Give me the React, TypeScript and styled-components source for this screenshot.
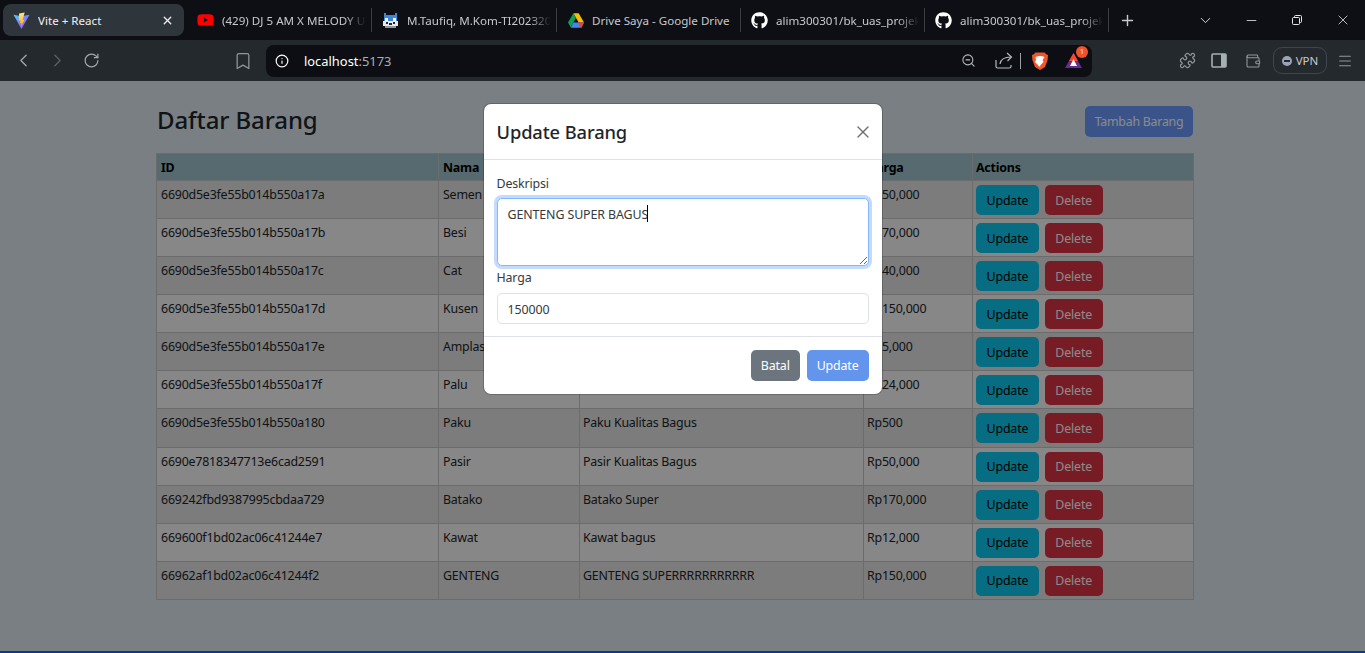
import React from "react";
import styled, { createGlobalStyle } from "styled-components";
import { FaGithub, FaYoutube } from "react-icons/fa";
import {
  ChevronLeft,
  ChevronRight,
  ChevronDown,
  RotateCw,
  Bookmark,
  Info,
  ZoomOut,
  Menu,
  Minus,
  Plus,
  X,
  Wallet,
  Puzzle,
} from "lucide-react";

const FONT = `"Noto Sans", "Open Sans", sans-serif`;

const GlobalStyle = createGlobalStyle`
  html, body {
    margin: 0;
    padding: 0;
    height: 100%;
    overflow: hidden;
    font-family: ${FONT};
  }
  * { box-sizing: border-box; }
`;

const Screen = styled.div`
  width: 1365px;
  height: 653px;
  display: flex;
  flex-direction: column;
  overflow: hidden;
  border-bottom: 2px solid #053a8c;
`;

/* browser frame */
const TabStrip = styled.div`
  height: 40px;
  background: #0e0f14;
  display: flex;
  align-items: flex-start;
  padding: 4px 0 0 3px;
  color: #c6c9cc;
`;

const Tab = styled.div<{ $active?: boolean; $w: number; $pl?: number }>`
  width: ${(p) => p.$w}px;
  height: 32px;
  flex: none;
  display: flex;
  align-items: center;
  gap: 8px;
  padding: 0 ${(p) => (p.$active ? 10 : 5)}px 0 ${(p) => p.$pl ?? 10}px;
  border-radius: 8px;
  background: ${(p) => (p.$active ? "#2f363b" : "transparent")};
  color: ${(p) => (p.$active ? "#f0f1f2" : "#c6c9cc")};
  position: relative;
  font-size: 11.6px;
`;

const TabSep = styled.div`
  width: 1px;
  height: 24px;
  margin-top: 4px;
  background: #3a3e43;
  flex: none;
`;

const TabIcon = styled.span`
  width: 17px;
  height: 17px;
  flex: none;
  display: flex;
  align-items: center;
  justify-content: center;
`;

const TabTitle = styled.span<{ $fade?: boolean }>`
  flex: 1;
  min-width: 0;
  white-space: nowrap;
  overflow: hidden;
  ${(p) =>
    p.$fade
      ? `mask-image: linear-gradient(to right, #000 85%, transparent 100%);`
      : ""}
`;

const WindowControls = styled.div`
  margin-left: auto;
  margin-right: -1px;
  display: flex;
  align-items: center;
  height: 32px;
`;

const WinButton = styled.div`
  width: 46px;
  display: flex;
  justify-content: center;
  color: #e4e6e8;
`;

const NewTab = styled.div`
  width: 36px;
  height: 32px;
  flex: none;
  display: flex;
  align-items: center;
  justify-content: center;
  color: #c6c9cc;
`;

const Toolbar = styled.div`
  height: 41px;
  background: #24292d;
  display: flex;
  align-items: center;
  color: #a3a9ae;
  padding-left: 6px;
`;

const NavButton = styled.div<{ $dim?: boolean }>`
  width: 34px;
  display: flex;
  justify-content: center;
  color: ${(p) => (p.$dim ? "#5b6166" : "#a3a9ae")};
`;

const BookmarkSlot = styled.div`
  width: 152px;
  display: flex;
  justify-content: flex-end;
  padding-right: 7px;
  color: #8f979d;
`;

const UrlBar = styled.div`
  width: 826px;
  height: 32px;
  margin-left: 6px;
  background: #0d0e13;
  border-radius: 8px;
  display: flex;
  align-items: center;
  padding: 0 10px 0 9px;
  color: #e6e8ea;
  font-size: 12.9px;
`;

const UrlText = styled.span`
  margin-left: 15px;
  flex: 1;
  color: #fff;
  b {
    font-weight: 400;
    color: #a9aeb3;
  }
`;

const UrlIcon = styled.span<{ $gap?: number }>`
  display: flex;
  margin-left: ${(p) => p.$gap ?? 0}px;
  color: #b5babe;
  position: relative;
`;

const UrlDivider = styled.span`
  width: 1px;
  height: 16px;
  background: #9aa0a5;
  margin-left: 7px;
`;

const Badge = styled.span`
  position: absolute;
  top: -7px;
  right: -6px;
  width: 12px;
  height: 12px;
  border-radius: 50%;
  background: #f0532c;
  color: #fff;
  font-size: 7px;
  line-height: 12px;
  text-align: center;
`;

const ToolGroup = styled.div`
  display: flex;
  align-items: center;
  margin-left: 87px;
  color: #8f979d;
`;

const ToolSlot = styled.span<{ $ml?: number }>`
  display: flex;
  margin-left: ${(p) => p.$ml ?? 0}px;
`;

const VpnPill = styled.div`
  height: 27px;
  width: 54px;
  margin-left: 12px;
  border: 1px solid #3f464b;
  border-radius: 9px;
  display: flex;
  align-items: center;
  justify-content: center;
  gap: 4px;
  font-size: 11.5px;
  color: #c6cace;
`;

const VpnDot = styled.span`
  width: 10px;
  height: 10px;
  border-radius: 50%;
  background: #9ca3b5;
  position: relative;
  &::after {
    content: "";
    position: absolute;
    left: 2px;
    right: 2px;
    top: 4px;
    height: 2px;
    background: #24292d;
  }
`;

/* page */
const Page = styled.div`
  flex: 1;
  position: relative;
  background: #e2ebf3;
  padding: 19px 172px 0 156px;
`;

const PageHeader = styled.div`
  height: 53px;
  display: flex;
  justify-content: space-between;
  align-items: flex-start;
`;

const Title = styled.h2`
  margin: 0 0 0 1px;
  font-size: 24px;
  line-height: 39px;
  font-weight: 500;
  letter-spacing: -0.1px;
  color: #212529;
`;

const Button = styled.button<{ $bg: string; $fg?: string }>`
  height: 30px;
  border: 0;
  border-radius: 5px;
  padding: 0 10.5px;
  background: ${(p) => p.$bg};
  color: ${(p) => p.$fg ?? "#fff"};
  font-family: ${FONT};
  font-size: 12.4px;
  letter-spacing: -0.15px;
  white-space: nowrap;
`;

const AddButton = styled(Button)`
  margin-top: 6px;
  height: 31px;
  width: 108px;
  padding: 0;
  letter-spacing: -0.25px;
`;

const FooterButton = styled(Button)`
  height: 31px;
  padding: 0 10px;
`;

const Table = styled.table`
  width: 1037px;
  border-collapse: collapse;
  table-layout: fixed;
  font-size: 12.4px;
  letter-spacing: -0.2px;
  color: #212529;
`;

const Th = styled.th`
  height: 27px;
  padding: 0 4px;
  text-align: left;
  font-weight: 700;
  color: #000;
  background: #9fc4cf;
  border: 1px solid #c4c8cb;
  &:nth-child(n + 3) {
    padding-left: 3px;
  }
`;

const Row = styled.tr<{ $odd: boolean }>`
  background: ${(p) => (p.$odd ? "#e5e5e5" : "#f9f9f9")};
`;

const Td = styled.td`
  height: 38.09px;
  padding: 3px 4px 3px;
  vertical-align: top;
  border: 1px solid #c8c8c8;
  line-height: 21px;
  &:nth-child(n + 3) {
    padding-left: 3px;
  }
`;

const Actions = styled.div`
  display: flex;
  gap: 6px;
  margin-top: 1px;
`;

const Backdrop = styled.div`
  position: absolute;
  inset: 0;
  background: rgba(0, 0, 0, 0.46);
  display: flex;
  justify-content: center;
  align-items: flex-start;
  padding-top: 23px;
`;

const Modal = styled.div`
  width: 398px;
  height: 290px;
  background: #fff;
  border-radius: 7px;
  box-shadow: 0 0 0 1px rgba(0, 0, 0, 0.2);
  color: #212529;
  display: flex;
  flex-direction: column;
`;

const ModalHeader = styled.div`
  height: 56px;
  flex: none;
  padding: 0 13px;
  border-bottom: 1px solid #dee2e6;
  display: flex;
  align-items: center;
  justify-content: space-between;
`;

const ModalTitle = styled.h5`
  margin: 0;
  font-size: 18.3px;
  font-weight: 500;
  letter-spacing: -0.1px;
`;

const CloseButton = styled.span`
  display: flex;
  color: #6e6e6e;
  margin-right: -4px;
`;

const ModalBody = styled.div`
  flex: 1;
  padding: 14px 13px 0;
  display: flex;
  flex-direction: column;
`;

const Label = styled.label<{ $mt?: number }>`
  margin-top: ${(p) => p.$mt ?? 0}px;
  font-size: 12.4px;
  line-height: 19px;
  letter-spacing: -0.15px;
  color: #343a40;
`;

const FieldWrap = styled.div`
  position: relative;
  margin-top: 5px;
  height: 68px;
`;

const TextArea = styled.textarea`
  display: block;
  width: 100%;
  height: 68px;
  padding: 6px 10px;
  border: 1px solid #86b7fe;
  border-radius: 5px;
  box-shadow: 0 0 0 3px #c2dbfe;
  outline: 0;
  font-family: ${FONT};
  font-size: 12.4px;
  line-height: 19px;
  letter-spacing: -0.1px;
  color: #343a40;
`;

const Caret = styled.span`
  position: absolute;
  left: 150px;
  top: 7px;
  width: 1px;
  height: 17px;
  background: #000;
`;

const Input = styled.input`
  display: block;
  width: 100%;
  height: 31px;
  margin-top: 6px;
  padding: 1px 10px 0;
  border: 1px solid #dee2e6;
  border-radius: 5px;
  font-family: ${FONT};
  font-size: 12.4px;
  letter-spacing: -0.1px;
  color: #343a40;
`;

const ModalFooter = styled.div`
  height: 58px;
  flex: none;
  padding: 13px 13px 0;
  border-top: 1px solid #dee2e6;
  display: flex;
  justify-content: flex-end;
  gap: 7px;
`;

const rows = [
  ["6690d5e3fe55b014b550a17a", "Semen", "Semen Kualitas Bagus", "Rp50,000"],
  ["6690d5e3fe55b014b550a17b", "Besi", "Besi Kualitas Bagus", "Rp70,000"],
  ["6690d5e3fe55b014b550a17c", "Cat", "Cat Kualitas Bagus", "Rp40,000"],
  ["6690d5e3fe55b014b550a17d", "Kusen", "Kusen Kualitas Bagus", "Rp150,000"],
  ["6690d5e3fe55b014b550a17e", "Amplas", "Amplas Kualitas Bagus", "Rp5,000"],
  ["6690d5e3fe55b014b550a17f", "Palu", "Palu Kualitas Bagus", "Rp24,000"],
  ["6690d5e3fe55b014b550a180", "Paku", "Paku Kualitas Bagus", "Rp500"],
  ["6690e7818347713e6cad2591", "Pasir", "Pasir Kualitas Bagus", "Rp50,000"],
  ["669242fbd9387995cbdaa729", "Batako", "Batako Super", "Rp170,000"],
  ["669600f1bd02ac06c41244e7", "Kawat", "Kawat bagus", "Rp12,000"],
  ["66962af1bd02ac06c41244f2", "GENTENG", "GENTENG SUPERRRRRRRRRRR", "Rp150,000"],
];

const ViteLogo = () => (
  <svg width="17" height="17" viewBox="0 0 32 32">
    <defs>
      <linearGradient id="viteA" x1="0" y1="0" x2="1" y2="1">
        <stop offset="0" stopColor="#41d1ff" />
        <stop offset="1" stopColor="#bd34fe" />
      </linearGradient>
      <linearGradient id="viteB" x1="0" y1="0" x2="0" y2="1">
        <stop offset="0" stopColor="#ffea83" />
        <stop offset="1" stopColor="#ffa800" />
      </linearGradient>
    </defs>
    <path d="M1 5 L15.5 8 L31 5 L16.5 31 Q16 32 15.4 31 Z" fill="url(#viteA)" />
    <path d="M22 1 L11.5 3 L10.8 16 L14 15.3 L13 21 L16 20 L14.8 27 L22 14 L18 15 Z" fill="url(#viteB)" />
  </svg>
);

const PixelCat = () => (
  <svg width="17" height="17" viewBox="0 0 16 16" shapeRendering="crispEdges">
    <path d="M2 1h2v2h8V1h2v7H2z" fill="#3f87d6" />
    <path d="M1 8h14v5H1z" fill="#e8e8e8" />
    <path d="M3 6h3v2H3zM10 6h3v2h-3z" fill="#f4f4f4" />
    <path d="M4 9h2v2H4zM10 9h2v2h-2zM7 10h2v2H7z" fill="#23272b" />
    <path d="M3 13h10v2H3z" fill="#8f959b" />
  </svg>
);

const DriveLogo = () => (
  <svg width="16" height="15" viewBox="0 0 24 22">
    <path d="M8 0h8l8 14h-8z" fill="#fbbc04" />
    <path d="M8 0l4 7L4 21 0 14z" fill="#0f9d58" />
    <path d="M8 14h16l-4 8H4z" fill="#4285f4" />
    <path d="M16 14h8l-4 8-4-4z" fill="#ea4335" />
  </svg>
);

const BraveLogo = () => (
  <svg width="16" height="18" viewBox="0 0 16 18">
    <path d="M3.5 0.5h9L14.5 2.5 16 3l-.4 5-2.6 7-5 3-5-3L.4 8 0 3l1.5-.5z" fill="#f1562b" />
    <path d="M3.5 5l3-1h3l3 1-2 3 1 2-3 3-.5 1.5h-1L6 13l-3-3 1-2z" fill="#fff" />
  </svg>
);

const BatLogo = () => (
  <svg width="17" height="15" viewBox="0 0 17 15">
    <path d="M8.5 0L17 15H0z" fill="#662d91" />
    <path d="M8.5 0L13 8H4z" fill="#ff4724" />
    <path d="M8.5 6L12 13H5z" fill="#fff" />
  </svg>
);

const ShareIcon = () => (
  <svg width="18" height="17" viewBox="0 0 18 17" fill="none" stroke="currentColor" strokeWidth="1.2">
    <path d="M1 8v6.5a1.5 1.5 0 0 0 1.5 1.5h12a1.5 1.5 0 0 0 1.5-1.5V13" />
    <path d="M5 12c.6-4.5 4-7 11-7" />
    <path d="M12 1l4.5 4-4 4" />
  </svg>
);

const SidePanelIcon = () => (
  <svg width="16" height="15" viewBox="0 0 16 15">
    <rect x="1" y="1" width="14" height="13" rx="1" fill="none" stroke="#a8afb4" strokeWidth="1.6" />
    <rect x="10" y="1" width="5" height="13" fill="#a8afb4" />
  </svg>
);

export default function App() {
  return (
    <Screen>
      <GlobalStyle />
      <TabStrip>
        <Tab $active $w={181}>
          <TabIcon>
            <ViteLogo />
          </TabIcon>
          <TabTitle>Vite + React</TabTitle>
          <X size={13} strokeWidth={2.4} color="#f0f1f2" />
        </Tab>
        <Tab $w={187} $pl={13}>
          <TabIcon>
            <FaYoutube size={18} color="#f00" />
          </TabIcon>
          <TabTitle $fade>(429) DJ 5 AM X MELODY UNCH</TabTitle>
        </Tab>
        <TabSep />
        <Tab $w={184}>
          <TabIcon>
            <PixelCat />
          </TabIcon>
          <TabTitle $fade>M.Taufiq, M.Kom-TI2023201</TabTitle>
        </Tab>
        <TabSep />
        <Tab $w={183}>
          <TabIcon>
            <DriveLogo />
          </TabIcon>
          <TabTitle>Drive Saya - Google Drive</TabTitle>
        </Tab>
        <TabSep />
        <Tab $w={183}>
          <TabIcon>
            <FaGithub size={17} color="#fff" />
          </TabIcon>
          <TabTitle $fade>alim300301/bk_uas_projek</TabTitle>
        </Tab>
        <TabSep />
        <Tab $w={183}>
          <TabIcon>
            <FaGithub size={17} color="#fff" />
          </TabIcon>
          <TabTitle $fade>alim300301/bk_uas_projek</TabTitle>
        </Tab>
        <TabSep />
        <NewTab>
          <Plus size={17} strokeWidth={2} />
        </NewTab>
        <WindowControls>
          <WinButton>
            <ChevronDown size={17} strokeWidth={1.3} />
          </WinButton>
          <WinButton>
            <Minus size={15} strokeWidth={1.3} />
          </WinButton>
          <WinButton>
            <svg width="12" height="12" viewBox="0 0 12 12" fill="none" stroke="currentColor">
              <rect x="1.5" y="3.5" width="7" height="7" rx="1" />
              <path d="M3.5 3.5V2.5a1 1 0 0 1 1-1h5a1 1 0 0 1 1 1v5a1 1 0 0 1-1 1H8.5" />
            </svg>
          </WinButton>
          <WinButton>
            <X size={16} strokeWidth={1.2} />
          </WinButton>
        </WindowControls>
      </TabStrip>
      <Toolbar>
        <NavButton>
          <ChevronLeft size={21} strokeWidth={1.5} />
        </NavButton>
        <NavButton $dim>
          <ChevronRight size={21} strokeWidth={1.5} />
        </NavButton>
        <NavButton>
          <RotateCw size={17} strokeWidth={1.7} />
        </NavButton>
        <BookmarkSlot>
          <Bookmark size={20} strokeWidth={1.5} />
        </BookmarkSlot>
        <UrlBar>
          <Info size={14} strokeWidth={2} color="#fff" />
          <UrlText>
            localhost<b>:5173</b>
          </UrlText>
          <UrlIcon>
            <ZoomOut size={15} strokeWidth={1.7} />
          </UrlIcon>
          <UrlIcon $gap={19}>
            <ShareIcon />
          </UrlIcon>
          <UrlDivider />
          <UrlIcon $gap={11}>
            <BraveLogo />
          </UrlIcon>
          <UrlIcon $gap={17}>
            <BatLogo />
            <Badge>1</Badge>
          </UrlIcon>
        </UrlBar>
        <ToolGroup>
          <Puzzle size={17} strokeWidth={1.7} />
          <ToolSlot $ml={15}>
            <SidePanelIcon />
          </ToolSlot>
          <ToolSlot $ml={18}>
            <Wallet size={16} strokeWidth={1.6} />
          </ToolSlot>
          <VpnPill>
            <VpnDot />
            VPN
          </VpnPill>
          <ToolSlot $ml={10}>
            <Menu size={16} strokeWidth={1.6} />
          </ToolSlot>
        </ToolGroup>
      </Toolbar>
      <Page>
        <PageHeader>
          <Title>Daftar Barang</Title>
          <AddButton $bg="#6c9cff">Tambah Barang</AddButton>
        </PageHeader>
        <Table>
          <colgroup>
            <col style={{ width: 282 }} />
            <col style={{ width: 141 }} />
            <col style={{ width: 284 }} />
            <col style={{ width: 109 }} />
            <col style={{ width: 221 }} />
          </colgroup>
          <thead>
            <tr>
              <Th>ID</Th>
              <Th>Nama</Th>
              <Th>Deskripsi</Th>
              <Th>Harga</Th>
              <Th>Actions</Th>
            </tr>
          </thead>
          <tbody>
            {rows.map((r, i) => (
              <Row key={r[0]} $odd={i % 2 === 0}>
                <Td>{r[0]}</Td>
                <Td>{r[1]}</Td>
                <Td>{r[2]}</Td>
                <Td>{r[3]}</Td>
                <Td>
                  <Actions>
                    <Button $bg="#0dcaf0" $fg="#000">
                      Update
                    </Button>
                    <Button $bg="#dc3545">Delete</Button>
                  </Actions>
                </Td>
              </Row>
            ))}
          </tbody>
        </Table>
        <Backdrop>
          <Modal>
            <ModalHeader>
              <ModalTitle>Update Barang</ModalTitle>
              <CloseButton>
                <X size={20} strokeWidth={1.6} />
              </CloseButton>
            </ModalHeader>
            <ModalBody>
              <Label>Deskripsi</Label>
              <FieldWrap>
                <TextArea defaultValue="GENTENG SUPER BAGUS" />
                <Caret />
              </FieldWrap>
              <Label $mt={2}>Harga</Label>
              <Input defaultValue="150000" />
            </ModalBody>
            <ModalFooter>
              <FooterButton $bg="#6c757d">Batal</FooterButton>
              <FooterButton $bg="#6495ed">Update</FooterButton>
            </ModalFooter>
          </Modal>
        </Backdrop>
      </Page>
    </Screen>
  );
}
